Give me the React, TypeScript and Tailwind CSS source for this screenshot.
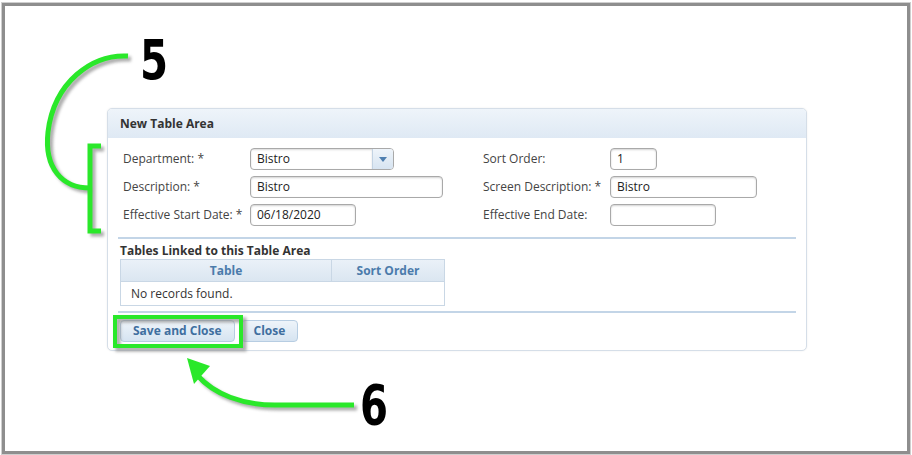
import React from 'react';

const font = { fontFamily: '"Open Sans", "Liberation Sans", sans-serif' };

function TextBox({ value, w }: { value?: string; w: string }) {
  return (
    <div
      className={`${w} h-[22px] flex items-center px-[6px] bg-white border border-[#a9a9a9] rounded-[4px] shadow-[inset_0_1px_2px_rgba(0,0,0,0.18)] text-[12px] text-[#222]`}
    >
      {value}
    </div>
  );
}

function SelectBox({ value }: { value: string }) {
  return (
    <div className="w-[144px] h-[22px] flex bg-white border border-[#a9a9a9] rounded-[4px] overflow-hidden text-[12px] text-[#222]">
      <div className="flex-1 flex items-center px-[6px] shadow-[inset_0_1px_2px_rgba(0,0,0,0.15)]">{value}</div>
      <div className="w-[21px] flex items-center justify-center border-l border-[#c3d3e3] bg-gradient-to-b from-[#eef4fa] to-[#d7e4f1]">
        <svg width="8" height="5" viewBox="0 0 8 5">
          <path d="M0 0 H8 L4 5 Z" fill="#4f7fb0" />
        </svg>
      </div>
    </div>
  );
}

function Row({ label, children }: { label: string; children: React.ReactNode }) {
  return (
    <div className="flex items-center h-[22px]">
      <div className="w-[127px] text-[12px] text-[#444] whitespace-nowrap">{label}</div>
      {children}
    </div>
  );
}

function Btn({ children }: { children: React.ReactNode }) {
  return (
    <div className="h-[22px] px-[12px] flex items-center rounded-[4px] border border-[#b7cde2] bg-gradient-to-b from-[#eef4fa] to-[#d6e4f1] text-[12px] font-bold text-[#3f6f9f]">
      {children}
    </div>
  );
}

export default function App() {
  return (
    <div className="relative w-[912px] h-[455px] bg-white overflow-hidden" style={font}>
      <div className="absolute left-[1px] top-[2px] right-[1px] bottom-0 border border-[#cfcfcf]" />
      <div className="ml-[2px] mt-[3px] mr-[2px] h-[451px] border-[3px] border-[#8e8e8e] pl-[102px] pt-[102px]">
        {/* Panel */}
        <div className="w-[700px] rounded-[5px] border border-[#d5dee8] bg-white shadow-[0_0_2px_rgba(0,0,0,0.08)] overflow-hidden">
          <div className="h-[29px] flex items-center px-[12px] bg-gradient-to-b from-[#eef4fa] to-[#dfe9f4] text-[12px] font-bold text-[#333]">
            New Table Area
          </div>
          <div className="px-[10px] pt-[10px] pb-[8px]">
            <div className="flex px-[5px]">
              <div className="w-[360px] flex flex-col gap-[6px]">
                <Row label="Department: *">
                  <SelectBox value="Bistro" />
                </Row>
                <Row label="Description: *">
                  <TextBox value="Bistro" w="w-[193px]" />
                </Row>
                <Row label="Effective Start Date: *">
                  <TextBox value="06/18/2020" w="w-[106px]" />
                </Row>
              </div>
              <div className="flex flex-col gap-[6px]">
                <Row label="Sort Order:">
                  <TextBox value="1" w="w-[47px]" />
                </Row>
                <Row label="Screen Description: *">
                  <TextBox value="Bistro" w="w-[147px]" />
                </Row>
                <Row label="Effective End Date:">
                  <TextBox w="w-[106px]" />
                </Row>
              </div>
            </div>
            <div className="mt-[11px] h-[2px] bg-[#c3d5e7]" />
            <div className="mt-[4px] px-[2px] text-[12px] font-bold text-[#333] leading-[16px]">Tables Linked to this Table Area</div>
            <div className="ml-[2px] w-[325px] border border-[#c9d7e5]">
              <div className="flex h-[22px] bg-gradient-to-b from-[#eaf1f8] to-[#dbe6f1] border-b border-[#c9d7e5] text-[12px] font-bold text-[#4b7bab]">
                <div className="w-[211px] flex items-center justify-center border-r border-[#c9d7e5]">Table</div>
                <div className="flex-1 flex items-center justify-center">Sort Order</div>
              </div>
              <div className="h-[23px] flex items-center px-[10px] text-[12px] text-[#333]">No records found.</div>
            </div>
            <div className="mt-[5px] h-[2px] bg-[#c3d5e7]" />
            <div className="mt-[7px] flex gap-[6px] px-[2px]">
              <Btn>Save and Close</Btn>
              <Btn>Close</Btn>
            </div>
          </div>
        </div>
      </div>

      {/* Annotations */}
      <svg className="absolute left-0 top-0 pointer-events-none" width="912" height="455" viewBox="0 0 912 455">
        <defs>
          <filter id="sh" x="-20%" y="-20%" width="140%" height="140%">
            <feGaussianBlur stdDeviation="1.5" />
          </filter>
        </defs>
        <g transform="translate(3 3)" stroke="#8a8a8a" strokeWidth="5" fill="none" filter="url(#sh)" opacity="0.7">
          <path d="M128 56 C 92 54, 54 82, 48 132 C 44 168, 62 188, 90 188" />
          <path d="M101 146 H90 V231 H101" />
          <path d="M354 405 H275 C 242 405, 214 394, 198 376" />
          <rect x="115" y="317" width="126" height="29" />
        </g>
        <g stroke="#2ae82a" strokeWidth="5" fill="none">
          <path d="M128 56 C 92 54, 54 82, 48 132 C 44 168, 62 188, 90 188" />
          <path d="M101 146 H90 V231 H101" />
          <path d="M354 405 H275 C 242 405, 214 394, 198 376" />
        </g>
        <rect x="115" y="317" width="126" height="29" stroke="#2ae82a" strokeWidth="4" fill="none" />
        <polygon points="187,358 210,366 194,384" fill="#2ae82a" />
        <text x="140" y="79" fontSize="56" fontWeight="bold" fill="#000" textLength="28" lengthAdjust="spacingAndGlyphs" style={{ fontFamily: '"DejaVu Sans Condensed", "Liberation Sans", sans-serif' }}>5</text>
        <text x="360" y="424" fontSize="56" fontWeight="bold" fill="#000" textLength="28" lengthAdjust="spacingAndGlyphs" style={{ fontFamily: '"DejaVu Sans Condensed", "Liberation Sans", sans-serif' }}>6</text>
      </svg>
    </div>
  );
}
